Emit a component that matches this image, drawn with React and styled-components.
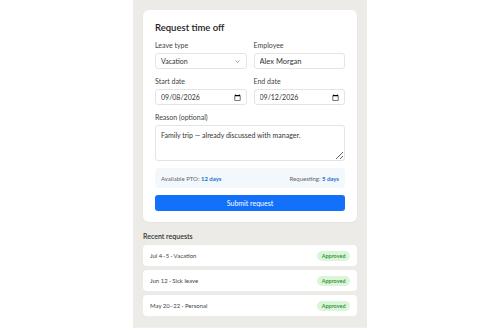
import React from "react";
import styled, { createGlobalStyle } from "styled-components";

const FONT = `Lato, "Noto Sans", sans-serif`;

const Global = createGlobalStyle`
  html, body { margin: 0; padding: 0; background: #ffffff; }
  body { font-family: ${FONT}; font-size: 7px; }
  * { box-sizing: border-box; }
`;

const Page = styled.div`
  width: 500px;
  height: 333px;
  overflow: hidden;
  background: #ffffff;
`;

const Column = styled.main`
  width: 234px;
  height: 328px;
  margin: 0 auto;
  background: #ecebe8;
  padding: 10px 10px 12px;
  border-bottom: 1px solid #f0f0ef;
`;

const Card = styled.section`
  background: #ffffff;
  border-radius: 6px;
  padding: 12px 12px 11px;
  box-shadow: 0 1px 2px rgba(0, 0, 0, 0.04);
  display: flex;
  flex-direction: column;
  gap: 7px;
`;

const Title = styled.h1`
  margin: 0;
  font-size: 9.5px;
  line-height: 11px;
  font-weight: 600;
  color: #222;
`;

const Grid = styled.div`
  display: grid;
  grid-template-columns: 1fr 1fr;
  column-gap: 7px;
`;

const Field = styled.label`
  display: flex;
  flex-direction: column;
  gap: 3px;
  min-width: 0;
`;

const Label = styled.span`
  font-size: 7px;
  line-height: 10px;
  color: #444;
`;

const controlCss = `
  display: block;
  width: 100%;
  height: 16px;
  border: 1px solid #e4e4e4;
  border-radius: 3px;
  background: #fff;
  font-family: ${FONT};
  font-size: 7px;
  color: #333;
  padding: 0 5px;
  outline: none;
  margin: 0;
`;

const Input = styled.input`
  ${controlCss}
  font-size: ${(p) => (p.$large ? "7.5px" : "7px")};
  &::-webkit-calendar-picker-indicator {
    width: 7px;
    height: 7px;
    padding: 0;
    margin: 0;
  }
  &::-webkit-datetime-edit,
  &::-webkit-datetime-edit-fields-wrapper,
  &::-webkit-datetime-edit-month-field,
  &::-webkit-datetime-edit-day-field,
  &::-webkit-datetime-edit-year-field,
  &::-webkit-datetime-edit-text {
    padding: 0;
  }
`;

const SelectWrap = styled.div`
  position: relative;
`;

const Select = styled.select`
  ${controlCss}
  appearance: none;
  -webkit-appearance: none;
`;

const Chevron = styled.svg`
  position: absolute;
  right: 7px;
  top: 6.5px;
  width: 5px;
  height: 3px;
  pointer-events: none;
`;

const TextArea = styled.textarea`
  ${controlCss}
  height: 36px;
  padding: 4px 5px;
  resize: vertical;
  line-height: 10px;
`;

const Info = styled.div`
  height: 20px;
  background: #f3f8fd;
  border-radius: 4px;
  padding: 0 6px;
  display: flex;
  align-items: center;
  justify-content: space-between;
  font-size: 6px;
  color: #666;
`;

const Strong = styled.b`
  color: #1c6fd0;
  font-weight: 700;
`;

const Button = styled.button`
  display: block;
  height: 16px;
  border: none;
  border-radius: 3px;
  background: #1370fb;
  color: #fff;
  font-family: ${FONT};
  font-size: 7px;
  padding: 0;
`;

const SectionTitle = styled.h2`
  margin: 9px 0 3px;
  font-size: 7px;
  line-height: 11px;
  font-weight: 600;
  color: #333;
`;

const List = styled.ul`
  list-style: none;
  margin: 0;
  padding: 0;
  display: flex;
  flex-direction: column;
  gap: 4px;
`;

const Row = styled.li`
  height: 21px;
  background: #fff;
  border-radius: 4px;
  padding: 0 7px;
  display: flex;
  align-items: center;
  justify-content: space-between;
  font-size: 6px;
  color: #444;
`;

const Badge = styled.span`
  background: #daf5d8;
  color: #2f8d37;
  font-size: 5.5px;
  font-weight: 600;
  border-radius: 6px;
  padding: 0 4.5px;
  height: 10px;
  line-height: 10px;
`;

const requests = [
  { text: "Jul 4–5 · Vacation" },
  { text: "Jun 12 · Sick leave" },
  { text: "May 20–22 · Personal" },
];

export default function App() {
  return (
    <Page>
      <Global />
      <Column>
        <Card>
          <Title>Request time off</Title>
          <Grid>
            <Field>
              <Label>Leave type</Label>
              <SelectWrap>
                <Select defaultValue="Vacation">
                  <option>Vacation</option>
                  <option>Sick leave</option>
                  <option>Personal</option>
                </Select>
                <Chevron viewBox="0 0 10 6">
                  <path d="M1 1l4 4 4-4" fill="none" stroke="#777" strokeWidth="1.4" />
                </Chevron>
              </SelectWrap>
            </Field>
            <Field>
              <Label>Employee</Label>
              <Input $large defaultValue="Alex Morgan" />
            </Field>
          </Grid>
          <Grid>
            <Field>
              <Label>Start date</Label>
              <Input type="date" defaultValue="2026-09-08" />
            </Field>
            <Field>
              <Label>End date</Label>
              <Input type="date" defaultValue="2026-09-12" />
            </Field>
          </Grid>
          <Field>
            <Label>Reason (optional)</Label>
            <TextArea defaultValue="Family trip — already discussed with manager." />
          </Field>
          <Info>
            <span>
              Available PTO: <Strong>12 days</Strong>
            </span>
            <span>
              Requesting: <Strong>5 days</Strong>
            </span>
          </Info>
          <Button>Submit request</Button>
        </Card>
        <SectionTitle>Recent requests</SectionTitle>
        <List>
          {requests.map((r) => (
            <Row key={r.text}>
              <span>{r.text}</span>
              <Badge>Approved</Badge>
            </Row>
          ))}
        </List>
      </Column>
    </Page>
  );
}
